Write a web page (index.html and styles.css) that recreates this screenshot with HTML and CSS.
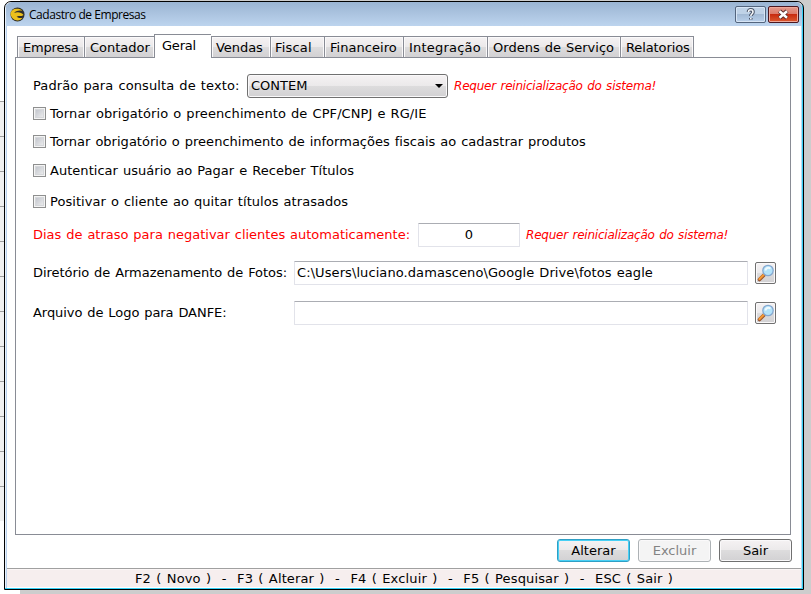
FILE: index.html
```html
<!DOCTYPE html>
<html lang="pt-BR">
<head>
<meta charset="utf-8">
<title>Cadastro de Empresas</title>
<link rel="stylesheet" href="styles.css">
</head>
<body>
<div class="backdrop"></div>
<main class="window">
  <header class="titlebar">
    <svg class="logo" viewBox="0 0 16 16" aria-hidden="true">
      <circle cx="8" cy="8" r="7.500" fill="#2e2e2c"/>
      <path d="M.5 8C.5 3 5 1 10 2C12 2.500 13 3.500 13 4C9 3 5.500 4.500 4.500 6.500C7 5 12 5 14.500 8.500L12.500 9.500H9L7 10.500C9 12 11.500 12 13.500 11.500C11 15.500 3 16 .5 8Z" fill="#ecc01b"/>
    </svg>
    <h1 class="title">Cadastro de Empresas</h1>
    <button class="caption help" aria-label="Ajuda"><svg viewBox="0 0 29 15"><path d="M12.500 5C12.500 2 17 2 17 5C17 7 14.800 7 14.800 9M14.800 11V12.500" fill="none" stroke="#4b5568" stroke-width="3.600"/><path d="M12.500 5C12.500 2 17 2 17 5C17 7 14.800 7 14.800 9M14.800 11V12.300" fill="none" stroke="#f5f7fa" stroke-width="1.600"/></svg></button>
    <button class="caption close" aria-label="Fechar"><svg viewBox="0 0 29 15"><path d="M10.500 4L18 11M18 4L10.500 11" fill="none" stroke="#572c2b" stroke-width="4.400"/><path d="M10.500 4.200L18 10.800M18 4.200L10.500 10.800" fill="none" stroke="#fff" stroke-width="2.500"/></svg></button>
  </header>
  <nav class="tabs">
    <button class="tab t1"><span>Empresa</span></button>
    <button class="tab t2"><span>Contador</span></button>
    <button class="tab t3 active"><span>Geral</span></button>
    <button class="tab t4"><span>Vendas</span></button>
    <button class="tab t5"><span>Fiscal</span></button>
    <button class="tab t6"><span>Financeiro</span></button>
    <button class="tab t7"><span>Integração</span></button>
    <button class="tab t8"><span>Ordens de Serviço</span></button>
    <button class="tab t9"><span>Relatorios</span></button>
  </nav>
  <section class="panel">
    <div class="row search-row"><span class="label search-label">Padrão para consulta de texto:</span><div class="combo"><span>CONTEM</span><i class="arrow"></i></div><em class="note">Requer reinicialização do sistema!</em></div>
    <div class="row check-row c1"><i class="box"></i><span class="k1">Tornar obrigatório o preenchimento de CPF/CNPJ e RG/IE</span></div>
    <div class="row check-row c2"><i class="box"></i><span class="k2">Tornar obrigatório o preenchimento de informações fiscais ao cadastrar produtos</span></div>
    <div class="row check-row c3"><i class="box"></i><span class="k3">Autenticar usuário ao Pagar e Receber Títulos</span></div>
    <div class="row check-row c4"><i class="box"></i><span class="k4">Positivar o cliente ao quitar títulos atrasados</span></div>
    <div class="row days-row"><span class="label days-label">Dias de atraso para negativar clientes automaticamente:</span><div class="field days">0</div><em class="note">Requer reinicialização do sistema!</em></div>
    <div class="row path-row"><span class="label path-label"><span class="p1">Diretório de Armazenamento de Fotos:</span></span><div class="field path"><span class="p3">C:\Users\luciano.damasceno\Google Drive\fotos eagle</span></div>
      <button class="browse" aria-label="Procurar"><svg viewBox="0 0 18 18"><path d="M2.500 15.500L7 11" stroke="#96532e" stroke-width="3.600" stroke-linecap="round"/><path d="M2.500 15L6.500 11" stroke="#f59a35" stroke-width="2.200" stroke-linecap="round"/><circle cx="11" cy="6.500" r="5.200" fill="#b3e3fa" stroke="#86a8d0" stroke-width="1.300"/><path d="M8.300 6.500C9 4 11 3 13.500 4.500" fill="none" stroke="#effaff" stroke-width="2"/></svg></button></div>
    <div class="row path-row"><span class="label path-label"><span class="p2">Arquivo de Logo para DANFE:</span></span><div class="field path"></div>
      <button class="browse" aria-label="Procurar"><svg viewBox="0 0 18 18"><path d="M2.500 15.500L7 11" stroke="#96532e" stroke-width="3.600" stroke-linecap="round"/><path d="M2.500 15L6.500 11" stroke="#f59a35" stroke-width="2.200" stroke-linecap="round"/><circle cx="11" cy="6.500" r="5.200" fill="#b3e3fa" stroke="#86a8d0" stroke-width="1.300"/><path d="M8.300 6.500C9 4 11 3 13.500 4.500" fill="none" stroke="#effaff" stroke-width="2"/></svg></button></div>
  </section>
  <div class="actions"><button class="btn primary"><span>Alterar</span></button><button class="btn disabled"><span>Excluir</span></button><button class="btn"><span>Sair</span></button></div>
  <footer class="status"><span>F2 ( Novo )&nbsp; -&nbsp; F3 ( Alterar )&nbsp; -&nbsp; F4 ( Excluir )&nbsp; -&nbsp; F5 ( Pesquisar )&nbsp; -&nbsp; ESC ( Sair )</span></footer>
</main>
</body>
</html>
```
FILE: styles.css
```css
* { box-sizing: border-box; }
html, body { margin: 0; width: 811px; height: 594px; overflow: hidden; }
body {
  position: relative;
  padding: 2px 7px 5px 4px;
  background: linear-gradient(#fff, #fff) 0 521px / 20px 73px no-repeat, #cdcdcd;
  font: 13px/16px "DejaVu Sans", sans-serif;
  color: #000;
}
.backdrop {
  position: absolute; left: 0; top: 0; width: 20px; height: 521px;
  background: repeating-linear-gradient(transparent 0 34px, #a0a0a0 34px 35px) 0 67px / 20px 420px no-repeat, linear-gradient(#fff 101px, #f0f0f0 101px);
}
button { font: inherit; color: inherit; margin: 0; padding: 0; }
.window {
  position: relative;
  display: flex; flex-direction: column;
  width: 800px; height: 589px; margin-top: -1px;
  border: 1px solid #000; border-radius: 7px 7px 0 0;
  padding: 0 2px 2px;
  background:
    linear-gradient(#35d0f5, #35d0f5) 0 100% / 100% 1px no-repeat,
    linear-gradient(90deg, #e9f2fb 1px, #b9d1ed 1px 2px, #fff 2px, #fff 796px, #b9dff5 796px 797px, #35d0f5 797px);
}
.titlebar {
  display: flex; align-items: flex-start; flex: none;
  height: 24px; margin: 0 -1px; padding: 4px 3px 0 4px;
  border-radius: 6px 6px 0 0;
  background: linear-gradient(#9ab4d2, #bdd4ee);
}
.logo { width: 15px; height: 15px; margin-top: 1px; }
.title { flex: 1; margin: 1px 0 0 4px; font: 12px/16px "Open Sans", sans-serif; letter-spacing: -.45px; }
.caption { width: 31px; height: 17px; border: 1px solid #53657e; border-radius: 2px; margin-right: 2px; box-shadow: inset 0 0 0 1px #d7e5f5; background: linear-gradient(#bfd2e7 50%, #a3bad5 50%, #b9d0eb); }
.caption svg { display: block; width: 29px; height: 15px; }
.close { margin-right: 0; border-color: #4b1720; box-shadow: inset 0 0 0 1px #efa899; background: linear-gradient(#e49a8c, #dc7868 48%, #c82b10 50%, #dc5a30); }
.tabs { display: flex; flex: none; align-items: flex-end; height: 23px; margin: 9px 0 -1px 10px; position: relative; z-index: 1; }
.tab { height: 22px; flex: none; border: 1px solid #898c95; border-right-width: 0; background: linear-gradient(#f5f2f3, #ebe9ea 50%, #dddcdd 50%, #d2d1d3); box-shadow: inset 1px 1px #fbfafb, inset -1px 0 #faf9fa; text-align: left; padding: 1px 0 0 5px; white-space: nowrap; }
.t1 { width: 67px; letter-spacing: -.2px; }
.t2 { width: 70px; }
.t3 { width: 57px; letter-spacing: -.2px; }
.t4 { width: 59px; letter-spacing: -.05px; padding-left: 4px; }
.t5 { width: 54px; letter-spacing: .2px; padding-left: 4px; }
.t6 { width: 79px; letter-spacing: .05px; }
.t7 { width: 84px; letter-spacing: .2px; }
.t8 { width: 133px; letter-spacing: .02px; word-spacing: .8px; }
.t9 { width: 74px; border-right-width: 1px; letter-spacing: -.1px; }
.tab.active { height: 24px; padding: 0 0 2px 7px; background: #fff; border-bottom: 0; box-shadow: none; }
.panel { height: 478px; flex: none; margin: 0 10px 0 8px; border: 1px solid #898c95; padding: 15px 0 0 17px; word-spacing: .8px; }
.row { display: flex; align-items: center; white-space: nowrap; }
.search-row { height: 25px; }
.search-label { width: 214px; letter-spacing: .107px; }
.combo { width: 201px; height: 24px; display: flex; align-items: center; justify-content: space-between; padding: 0 4px 0 3px; border: 1px solid #707070; border-radius: 3px; background: linear-gradient(#f5f2f3, #ebe9ea 50%, #dddcdd 50%, #d2d1d3); box-shadow: inset 0 0 0 1px #faf9fa; }
.arrow { border: 4px solid transparent; border-top-color: #000; border-bottom: 0; }
.note { margin-left: 6px; font-size: 12px; color: #f00; letter-spacing: -.21px; }
.box { width: 13px; height: 13px; margin-right: 4px; border: 1px solid #8e8f8f; background: linear-gradient(135deg, #b9bdc5, #f4f4f4); box-shadow: inset 0 0 0 1px #f4f4f4, inset 0 0 0 2px #d5d7da; }
.c1 { height: 31px; }
.c2 { height: 26px; }
.c2 .box { margin-bottom: 1px; }
.c3 { height: 31px; }
.c4 { height: 31px; }
.k1 { letter-spacing: .09px; }
.k2 { letter-spacing: .015px; }
.k3 { letter-spacing: .035px; }
.k4 { letter-spacing: .055px; }
.days-row { height: 36px; }
.days-label { width: 385px; color: #f00; letter-spacing: -.01px; }
.field { height: 24px; border: 1px solid #e2e3ea; border-top-color: #abadb3; border-radius: 1px; background: #fff; line-height: 21px; }
.days { width: 102px; text-align: center; line-height: 22px; }
.path-row { height: 40px; }
.path-label { width: 261px; }
.p1 { letter-spacing: -.045px; }
.p2 { letter-spacing: -.05px; }
.p3 { letter-spacing: .086px; }
.path { width: 454px; padding-left: 2px; }
.browse { width: 21px; height: 22px; margin-left: 7px; border: 1px solid #707070; border-radius: 2px; background: linear-gradient(#f5f2f3, #ebe9ea 50%, #dddcdd 50%, #d2d1d3); box-shadow: inset 0 0 0 1px #faf9fa; }
.browse svg { display: block; width: 18px; height: 18px; margin: 1px 0 1px 1px; }
.actions { display: flex; justify-content: flex-end; gap: 8px; margin: 4px 9px 0 0; height: 23px; flex: none; }
.btn { width: 73px; height: 23px; border: 1px solid #707070; border-radius: 3px; background: linear-gradient(#f5f2f3, #ebe9ea 50%, #dddcdd 50%, #d2d1d3); box-shadow: inset 0 0 0 1px #faf9fa; }
.btn.primary { border-color: #2f9fc5; box-shadow: inset 0 0 0 1px #48d0f5; }
.btn.disabled { border-color: #adb2b5; background: #f4f4f4; color: #838383; }
.status { flex: 1; margin-top: 6px; border-top: 1px solid #a0a0a0; box-shadow: inset 0 1px #fbf6f6; background: #f6eeee; text-align: center; padding-top: 2px; white-space: nowrap; letter-spacing: .14px; word-spacing: 1px; }
```
